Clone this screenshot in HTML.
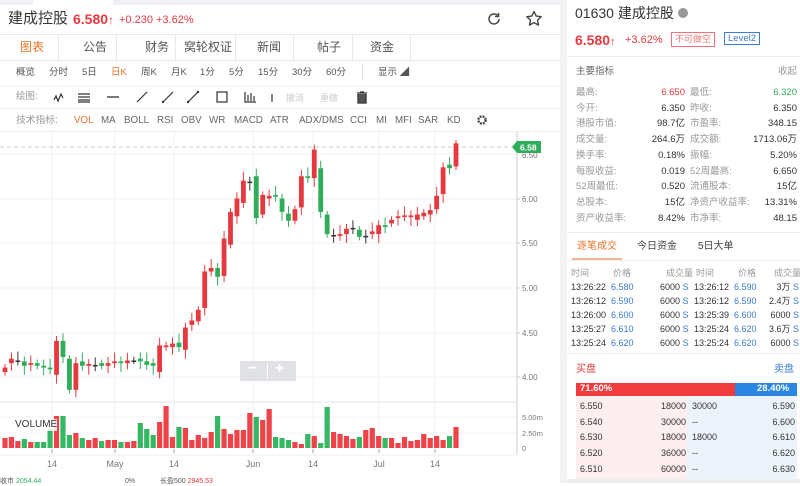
<!DOCTYPE html>
<html><head><meta charset="utf-8"><style>
*{margin:0;padding:0;box-sizing:border-box}
body{width:800px;height:483px;overflow:hidden;background:#fff;font-family:"Liberation Sans","Noto Sans CJK SC",sans-serif;color:#333;position:relative;line-height:1.2}
.a{position:absolute;white-space:nowrap}
.g{color:#999}
.r{color:#e5393f}
.gr{color:#2fad5b}
.b{color:#3b7bd0}
.row{position:absolute;left:575px;width:222px;font-size:9.5px;height:16px}
.row span{position:absolute;top:0;line-height:14px}
.tr{position:absolute;left:571px;width:230px;font-size:9px}
.tr span{position:absolute;top:0;line-height:12px}
.ob{position:absolute;left:578px;width:218px;font-size:9px;color:#333}
.ob span{position:absolute;top:0;line-height:12px}
</style></head><body>
<div class="a" style="left:0;top:0;width:560px;height:5px;background:#eef0f4"></div>
<div class="a" style="left:33px;top:0;width:80px;height:5px;background:#fff"></div>
<div class="a" style="left:560px;top:0;width:7px;height:483px;background:#f2f3f5"></div>
<div class="a" style="left:8px;top:10px;font-size:15px;color:#333">建成控股</div>
<div class="a" style="left:73px;top:11px;font-size:14px;font-weight:bold;color:#e5393f">6.580<span style="font-size:12px">↑</span></div>
<div class="a r" style="left:119px;top:14px;font-size:11px">+0.230 +3.62%</div>
<svg class="a" style="left:486px;top:11px" width="16" height="16" viewBox="0 0 16 16"><path d="M13 8a5 5 0 1 1-1.5-3.6" fill="none" stroke="#444" stroke-width="1.5"/><path d="M12.5 2v3.5H9" fill="none" stroke="#444" stroke-width="1.5"/></svg>
<svg class="a" style="left:525px;top:10px" width="18" height="18" viewBox="0 0 18 18"><path d="M9 1.5l2.2 4.6 5 .6-3.7 3.4 1 5-4.5-2.5-4.5 2.5 1-5L1.8 6.7l5-.6z" fill="none" stroke="#444" stroke-width="1.4" stroke-linejoin="round"/></svg>
<div class="a" style="left:0;top:34px;width:560px;height:1px;background:#e8e8e8"></div>
<div class="a" style="left:0;top:35px;width:560px;height:26px;border-bottom:1px solid #e8e8e8;font-size:12px">
<span class="a" style="left:20px;top:5px;color:#e8742c">图表</span>
<span class="a" style="left:58px;top:0;width:1px;height:25px;background:#e8e8e8"></span>
<span class="a" style="left:83px;top:5px;color:#555">公告</span>
<span class="a" style="left:116px;top:0;width:1px;height:25px;background:#e8e8e8"></span>
<span class="a" style="left:145px;top:5px;color:#555">财务</span>
<span class="a" style="left:175px;top:0;width:1px;height:25px;background:#e8e8e8"></span>
<span class="a" style="left:184px;top:5px;color:#555">窝轮权证</span>
<span class="a" style="left:235px;top:0;width:1px;height:25px;background:#e8e8e8"></span>
<span class="a" style="left:257px;top:5px;color:#555">新闻</span>
<span class="a" style="left:293px;top:0;width:1px;height:25px;background:#e8e8e8"></span>
<span class="a" style="left:317px;top:5px;color:#555">帖子</span>
<span class="a" style="left:352px;top:0;width:1px;height:25px;background:#e8e8e8"></span>
<span class="a" style="left:370px;top:5px;color:#555">资金</span>
<span class="a" style="left:410px;top:0;width:1px;height:25px;background:#e8e8e8"></span>
</div>
<div class="a" style="left:0;top:67px;font-size:9.5px;color:#555;width:560px">
<span class="a" style="left:16px">概览</span><span class="a" style="left:49px">分时</span><span class="a" style="left:82px">5日</span><span class="a" style="left:111px;color:#e8742c">日K</span><span class="a" style="left:141px">周K</span><span class="a" style="left:171px">月K</span><span class="a" style="left:200px">1分</span><span class="a" style="left:229px">5分</span><span class="a" style="left:258px">15分</span><span class="a" style="left:292px">30分</span><span class="a" style="left:326px">60分</span><span class="a" style="left:362px;top:-2px;width:1px;height:14px;background:#ddd"></span><span class="a" style="left:378px">显示 ◢</span>
</div>
<div class="a" style="left:0;top:86px;width:560px;height:1px;background:#f0f0f0"></div>
<div class="a g" style="left:16px;top:91px;font-size:9.5px">绘图:</div>
<svg class="a" style="left:50px;top:88px" width="330" height="18" viewBox="0 0 330 18">
<path d="M4 12l2-4 2 5 3-7 2 4" fill="none" stroke="#333" stroke-width="1.2"/>
<path d="M28 6h12M28 9h12M28 12h12M28 14h12" stroke="#333" stroke-width="1.3"/>
<path d="M57 9h12" stroke="#333" stroke-width="1.3"/>
<path d="M87 14l10-10" stroke="#333" stroke-width="1.2"/>
<path d="M113 14l10-10" stroke="#333" stroke-width="1.2"/><circle cx="113" cy="14" r="1.2" fill="#333"/>
<path d="M138 14l10-10" stroke="#333" stroke-width="1.2"/><circle cx="138" cy="14" r="1.2" fill="#333"/><circle cx="148" cy="4" r="1.2" fill="#333"/>
<rect x="167" y="4" width="10" height="10" fill="none" stroke="#333" stroke-width="1.2"/>
<path d="M195 4v10h11M198 7v6M201 5v8M204 8v5" stroke="#333" stroke-width="1.2" fill="none"/>
<path d="M222 6v8" stroke="#333" stroke-width="1.2"/>
<text x="236" y="13" font-size="9" fill="#ccc" font-family="Liberation Sans,Noto Sans CJK SC,sans-serif">撤消</text>
<text x="270" y="13" font-size="9" fill="#ccc" font-family="Liberation Sans,Noto Sans CJK SC,sans-serif">重做</text>
<path d="M307 5h10M310 4h4M308 6v9h8V6" stroke="#333" stroke-width="1.3" fill="#555"/>
</svg>
<div class="a" style="left:0;top:108px;width:560px;height:1px;background:#f0f0f0"></div>
<div class="a" style="left:0;top:115px;font-size:9.8px;color:#666;width:560px">
<span class="a g" style="left:16px">技术指标:</span><span class="a" style="left:74px;color:#e8742c">VOL</span><span class="a" style="left:101px">MA</span><span class="a" style="left:124px">BOLL</span><span class="a" style="left:157px">RSI</span><span class="a" style="left:181px">OBV</span><span class="a" style="left:209px">WR</span><span class="a" style="left:234px">MACD</span><span class="a" style="left:270px">ATR</span><span class="a" style="left:299px">ADX/DMS</span><span class="a" style="left:350px">CCI</span><span class="a" style="left:376px">MI</span><span class="a" style="left:395px">MFI</span><span class="a" style="left:418px">SAR</span><span class="a" style="left:447px">KD</span>
</div>
<svg class="a" style="left:476px;top:114px" width="12" height="12" viewBox="0 0 12 12"><circle cx="6" cy="6" r="3.6" fill="none" stroke="#444" stroke-width="2.4" stroke-dasharray="1.9 1"/><circle cx="6" cy="6" r="1.5" fill="#fff"/></svg>
<div class="a" style="left:0;top:131px;width:560px;height:1px;background:#eee"></div>
<svg id="ch" class="a" style="left:0;top:132px" width="560" height="351" viewBox="0 132 560 351"></svg>
<div class="a" style="left:240px;top:361px;width:56px;height:20px;background:#dfe1e5;border-radius:2px"></div>
<div class="a" style="left:267px;top:363px;width:1px;height:16px;background:#fff"></div>
<div class="a" style="left:248px;top:359px;font-size:16px;color:#fff;font-weight:bold">−</div>
<div class="a" style="left:275px;top:359px;font-size:16px;color:#fff;font-weight:bold">+</div>
<div class="a" style="left:15px;top:419px;font-size:10px;color:#333;background:rgba(255,255,255,.85)">VOLUME</div>
<div class="a" style="left:0;top:478px;font-size:7px;color:#555;line-height:8px">收市 <span class="gr">2054.44</span></div>
<div class="a" style="left:125px;top:478px;font-size:7px;color:#555;line-height:8px">0%</div>
<div class="a" style="left:160px;top:478px;font-size:7px;color:#555;line-height:8px">长盈500 <span class="r">2945.53</span></div>
<div class="a" style="left:575px;top:5px;font-size:14px;color:#333">01630 建成控股 <span style="display:inline-block;width:10px;height:10px;border-radius:50%;background:#999;vertical-align:0"></span></div>
<div class="a" style="left:575px;top:32px;font-size:14px;font-weight:bold;color:#e5393f">6.580<span style="font-size:11px">↑</span></div>
<div class="a r" style="left:625px;top:34px;font-size:11px">+3.62%</div>
<div class="a" style="left:671px;top:32px;font-size:9px;color:#e5393f;border:1px solid #e5393f;padding:1px 3px;opacity:.7">不可做空</div>
<div class="a" style="left:724px;top:32px;font-size:9.5px;color:#3b7bd0;border:1px solid #3b7bd0;padding:0 3px">Level2</div>
<div class="a" style="left:567px;top:56px;width:233px;height:1px;background:#eee"></div>
<div class="a" style="left:576px;top:66px;font-size:9.5px;color:#666">主要指标</div>
<div class="a g" style="left:778px;top:66px;font-size:9.5px">收起</div>
<div id="stats"></div>
<div class="a" style="left:567px;top:232px;width:233px;height:1px;background:#eee"></div>
<div class="a" style="left:577px;top:241px;font-size:10px;color:#e8742c">逐笔成交</div>
<div class="a" style="left:572px;top:258px;width:50px;height:2px;background:#e8742c;opacity:.5"></div>
<div class="a" style="left:637px;top:241px;font-size:10px;color:#444">今日资金</div>
<div class="a" style="left:698px;top:241px;font-size:10px;color:#444">5日大单</div>
<div class="a" style="left:567px;top:260px;width:233px;height:1px;background:#eee"></div>
<div id="trades"></div>
<div class="a" style="left:567px;top:353px;width:233px;height:1px;background:#eee"></div>
<div class="a r" style="left:576px;top:364px;font-size:10px">买盘</div>
<div class="a b" style="left:774px;top:364px;font-size:10px">卖盘</div>
<div class="a" style="left:576px;top:383px;width:159px;height:13px;background:#f03c3f"></div>
<div class="a" style="left:735px;top:383px;width:62px;height:13px;background:#2a86e0"></div>
<div class="a" style="left:580px;top:383px;font-size:9.5px;color:#fff;font-weight:bold">71.60%</div>
<div class="a" style="left:757px;top:383px;font-size:9.5px;color:#fff;font-weight:bold">28.40%</div>
<div class="a" style="left:576px;top:396px;width:111px;height:87px;background:#fdeef0"></div>
<div class="a" style="left:687px;top:396px;width:110px;height:87px;background:#edf3fb"></div>
<div id="ob"></div>
<div class="a" style="left:567px;top:479px;width:233px;height:4px;background:#eee"></div>
<script>
var S=[["最高:","6.650","r","最低:","6.320","gr"],["今开:","6.350","","昨收:","6.350",""],["港股市值:","98.7亿","","市盈率:","348.15",""],["成交量:","264.6万","","成交额:","1713.06万",""],["换手率:","0.18%","","振幅:","5.20%",""],["每股收益:","0.019","","52周最高:","6.650",""],["52周最低:","0.520","","流通股本:","15亿",""],["总股本:","15亿","","净资产收益率:","13.31%",""],["资产收益率:","8.42%","","市净率:","48.15",""]];
var h="";S.forEach(function(s,i){var t=86+i*15.7;h+='<div class="row" style="top:'+t+'px"><span class="g" style="left:1px">'+s[0]+'</span><span class="'+s[2]+'" style="right:112px">'+s[1]+'</span><span class="g" style="left:115px">'+s[3]+'</span><span class="'+s[5]+'" style="right:0">'+s[4]+'</span></div>'});
document.getElementById("stats").innerHTML=h;
var T=[["13:26:22","6.580","6000","13:26:12","6.590","3万"],["13:26:12","6.590","6000","13:26:12","6.590","2.4万"],["13:26:00","6.600","6000","13:25:39","6.600","6000"],["13:25:27","6.610","6000","13:25:24","6.620","3.6万"],["13:25:24","6.620","6000","13:25:24","6.620","6000"]];
h='<div class="tr g" style="top:267px"><span style="left:0">时间</span><span style="left:42px">价格</span><span style="left:95px">成交量</span><span style="left:125px">时间</span><span style="left:167px">价格</span><span style="right:0">成交量</span></div>';
T.forEach(function(r,i){var t=281+i*14;h+='<div class="tr" style="top:'+t+'px"><span style="left:0">'+r[0]+'</span><span class="b" style="left:40px">'+r[1]+'</span><span style="left:89px">'+r[2]+' <b class="b" style="font-weight:normal">S</b></span><span style="left:123px">'+r[3]+'</span><span class="b" style="left:163px">'+r[4]+'</span><span style="right:2px">'+r[5]+' <b class="b" style="font-weight:normal">S</b></span></div>'});
document.getElementById("trades").innerHTML=h;
var O=[["6.550","18000","30000","6.590"],["6.540","30000","--","6.600"],["6.530","18000","18000","6.610"],["6.520","36000","--","6.620"],["6.510","60000","--","6.630"]];
h="";O.forEach(function(r,i){var t=400+i*15.7;h+='<div class="ob" style="top:'+t+'px"><span style="left:2px">'+r[0]+'</span><span style="right:110px">'+r[1]+'</span><span style="left:114px">'+r[2]+'</span><span style="right:1px">'+r[3]+'</span></div>'});
document.getElementById("ob").innerHTML=h;
var D=[[4.05,4.10],[4.15,4.20],[4.18,4.18],[4.17,4.12],[4.13,4.15],[4.15,4.12],[4.12,4.10],[4.10,4.08],[4.02,4.40],[4.40,4.22],[4.20,3.85],[3.85,4.15],[4.17,4.12],[4.12,4.14],[4.13,4.13],[4.15,4.12],[4.12,4.15],[4.15,4.17],[4.17,4.15],[4.15,4.18],[4.18,4.18],[4.20,4.17],[4.17,4.13],[4.15,4.12],[4.05,4.35],[4.33,4.35],[4.33,4.37],[4.38,4.33],[4.30,4.55],[4.58,4.63],[4.62,4.75],[4.77,5.18],[5.18,5.22],[5.22,5.12],[5.13,5.55],[5.48,5.85],[5.80,6.00],[5.95,6.20],[6.19,6.19],[6.25,5.78],[5.82,6.04],[6.00,6.03],[6.04,6.02],[6.00,5.85],[5.83,5.75],[5.75,5.88],[5.90,6.25],[6.25,6.23],[6.23,6.55],[6.34,5.85],[5.82,5.60],[5.59,5.59],[5.58,5.60],[5.60,5.66],[5.67,5.67],[5.65,5.57],[5.58,5.58],[5.60,5.63],[5.60,5.70],[5.70,5.68],[5.72,5.76],[5.78,5.80],[5.80,5.81],[5.79,5.81],[5.76,5.82],[5.80,5.84],[5.82,5.87],[5.88,6.03],[6.05,6.35],[6.38,6.34],[6.36,6.62]];
var V=[10,11,7,9,6,6,6,19,32,32,13,15,10,8,10,7,8,8,6,6,7,25,19,13,26,42,11,21,20,8,13,10,16,32,19,14,18,18,35,31,28,39,11,10,8,6,4,14,12,5,41,16,14,12,9,11,18,20,12,10,10,5,11,7,8,14,10,12,8,12,21,19,16];
function Y(p){return 154+(6.5-p)*89}
var s="";
[52,115,174,253,313,379,435].forEach(function(x){s+='<line x1="'+x+'" y1="132" x2="'+x+'" y2="455" stroke="#f0f0f0"/>'});
[154,199,243,288,333,377].forEach(function(y){s+='<line x1="0" y1="'+y+'" x2="517" y2="'+y+'" stroke="#f0f0f0"/>'});
s+='<line x1="0" y1="402" x2="517" y2="402" stroke="#e4e4e4"/><line x1="0" y1="433" x2="517" y2="433" stroke="#f3f3f3"/><line x1="0" y1="417" x2="517" y2="417" stroke="#f3f3f3"/>';
s+='<line x1="517" y1="132" x2="517" y2="455" stroke="#ccc"/><line x1="0" y1="455" x2="517" y2="455" stroke="#eee"/>';
s+='<line x1="0" y1="147" x2="512" y2="147" stroke="#ccc" stroke-dasharray="4 3"/>';
var n=D.length,sp=(456-5)/(n-1);
D.forEach(function(d,i){var x=5+i*sp,o=d[0],c=d[1],up=c>o,eq=Math.abs(c-o)<0.005,col=eq?"#333":(up?"#e5393f":"#2fad5b");
var hi=Math.max(o,c)+0.04+((i*7)%5)*0.015,lo=Math.min(o,c)-0.04-((i*3)%5)*0.015;
s+='<line x1="'+x+'" y1="'+Y(hi)+'" x2="'+x+'" y2="'+Math.min(Y(lo),400)+'" stroke="'+col+'" stroke-width="1"/>';
var t=Y(Math.max(o,c)),b=Y(Math.min(o,c));if(b-t<1.5){b=t+1.5}
s+='<rect x="'+(x-2.4)+'" y="'+t+'" width="4.8" height="'+(b-t)+'" fill="'+col+'"/>';
var v=V[i]||8;s+='<rect x="'+(x-2.6)+'" y="'+(448-v)+'" width="5.2" height="'+v+'" fill="'+(up||eq?"#ee4349":"#35b863")+'"/>';});
s+='<path d="M512 147l5-6h24v12h-24z" fill="#2fad5b"/><text x="520" y="150.5" font-size="8.5" fill="#fff" font-weight="bold" font-family="Liberation Sans">6.58</text>';
var L=[["6.00",199],["5.50",243],["5.00",288],["4.50",333],["4.00",377]];
L.forEach(function(l){s+='<line x1="517" y1="'+l[1]+'" x2="520" y2="'+l[1]+'" stroke="#ccc"/><text x="522" y="'+(l[1]+3)+'" font-size="8" fill="#777" font-family="Liberation Sans">'+l[0]+'</text>'});
s+='<text x="522" y="158" font-size="8" fill="#777" font-family="Liberation Sans">6.50</text>';
[["5.00m",417],["2.50m",433],["0",448]].forEach(function(l){s+='<text x="522" y="'+(l[1]+3)+'" font-size="7.5" fill="#777" font-family="Liberation Sans">'+l[0]+'</text>'});
[["14",52],["May",115],["14",174],["Jun",253],["14",313],["Jul",379],["14",435]].forEach(function(l){s+='<line x1="'+l[1]+'" y1="449" x2="'+l[1]+'" y2="453" stroke="#aaa"/><text x="'+l[1]+'" y="467" font-size="9" fill="#777" text-anchor="middle" font-family="Liberation Sans">'+l[0]+'</text>'});
document.getElementById("ch").innerHTML=s;
</script>
</body></html>
